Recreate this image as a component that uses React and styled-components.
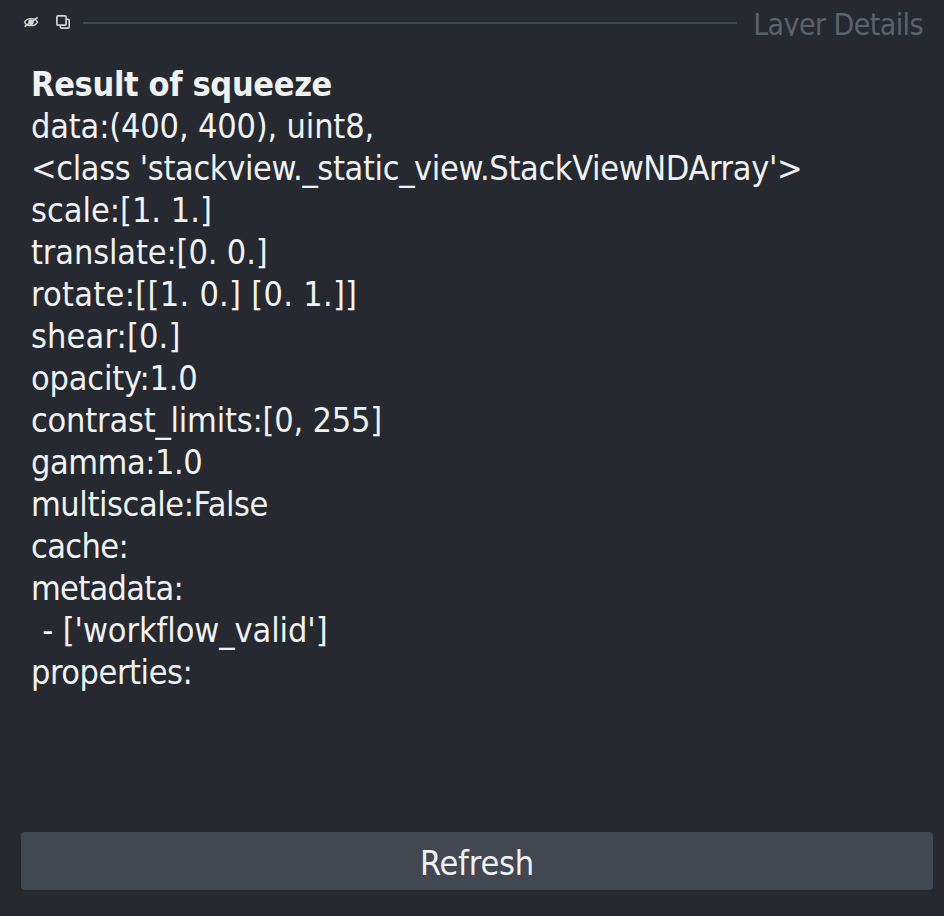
import React from "react";
import styled, { createGlobalStyle } from "styled-components";

const GlobalStyle = createGlobalStyle`
  body {
    margin: 0;
    background: #262930;
    color: #f0f1f2;
    font-family: "DejaVu Sans Condensed", "DejaVu Sans", sans-serif;
    font-stretch: condensed;
  }
`;

const Panel = styled.main`
  box-sizing: border-box;
  display: flex;
  flex-direction: column;
  height: 916px;
  padding: 0 11px 26px 21px;
  overflow: hidden;
`;

const TitleBar = styled.header`
  display: flex;
  align-items: center;
  height: 46px;
  padding-left: 2px;
`;

const IconButton = styled.button`
  display: flex;
  width: 16px;
  height: 16px;
  margin: 0 16px 2px 0;
  padding: 0;
  border: 0;
  background: none;
`;

const Rule = styled.div`
  flex: 1;
  height: 2px;
  margin: 0 16px 0 -4px;
  background: #414851;
`;

const Title = styled.span`
  height: 26px;
  margin-right: 10px;
  overflow: hidden;
  color: #5a626c;
  font-size: 30px;
  line-height: 30px;
  letter-spacing: -0.58px;
  white-space: nowrap;
`;

const Details = styled.section`
  flex: 1;
  padding: 17px 0 0 10px;
  font-size: 34px;
  line-height: 42px;
  white-space: pre;
`;

const Heading = styled.h1`
  margin: 0;
  font-size: inherit;
  line-height: inherit;
  letter-spacing: -0.35px;
`;

const Line = styled.div`
  height: 42px;
  padding-left: ${(p) => p.$indent || 0}px;
  letter-spacing: ${(p) => p.$tracking}px;
`;

const RefreshButton = styled.button`
  height: 58px;
  padding: 4px 0 0;
  border: 0;
  border-radius: 4px;
  background: #414851;
  color: #f0f1f2;
  font: inherit;
  font-size: 34px;
  letter-spacing: -0.15px;
`;

const lines = [
  ["data:(400, 400), uint8,", -0.18],
  ["<class 'stackview._static_view.StackViewNDArray'>", -0.36],
  ["scale:[1. 1.]", -0.02],
  ["translate:[0. 0.]", -0.14],
  ["rotate:[[1. 0.] [0. 1.]]", 0.27],
  ["shear:[0.]", 0.13],
  ["opacity:1.0", -0.2],
  ["contrast_limits:[0, 255]", -0.21],
  ["gamma:1.0", -0.46],
  ["multiscale:False", -0.43],
  ["cache:", -0.64],
  ["metadata:", -0.72],
  [" - ['workflow_valid']", -0.08, 1.5],
  ["properties:", -0.45],
];

const HideIcon = () => (
  <svg width="16" height="16" viewBox="0 0 16 16" fill="none" stroke="#d4d5d7">
    <path d="M1.5 8.1C3 5.3 5.3 4.6 8 4.6s5 .7 6.5 3.5C13 10.9 10.7 11.7 8 11.7S3 10.9 1.5 8.1Z" strokeWidth="1.3" />
    <circle cx="8" cy="8.1" r="2.8" fill="#d4d5d7" stroke="none" />
    <path d="M1.6 12.7 14.6 3.5" strokeWidth="1.6" />
  </svg>
);

const FloatIcon = () => (
  <svg width="16" height="16" viewBox="0 0 16 16" fill="none" stroke="#d4d5d7">
    <rect x="1.9" y="1.9" width="9.2" height="9.2" rx="1" strokeWidth="1.7" />
    <path d="M12 5.2h1.2a1 1 0 0 1 1 1v6.9a1 1 0 0 1-1 1H6.3a1 1 0 0 1-1-1V12" strokeWidth="1.6" />
  </svg>
);

export default function App() {
  return (
    <>
      <GlobalStyle />
      <Panel>
        <TitleBar>
          <IconButton aria-label="Hide"><HideIcon /></IconButton>
          <IconButton aria-label="Float"><FloatIcon /></IconButton>
          <Rule />
          <Title>Layer Details</Title>
        </TitleBar>
        <Details>
          <Heading>Result of squeeze</Heading>
          {lines.map(([text, tracking, indent]) => (
            <Line key={text} $tracking={tracking} $indent={indent}>{text}</Line>
          ))}
        </Details>
        <RefreshButton>Refresh</RefreshButton>
      </Panel>
    </>
  );
}
